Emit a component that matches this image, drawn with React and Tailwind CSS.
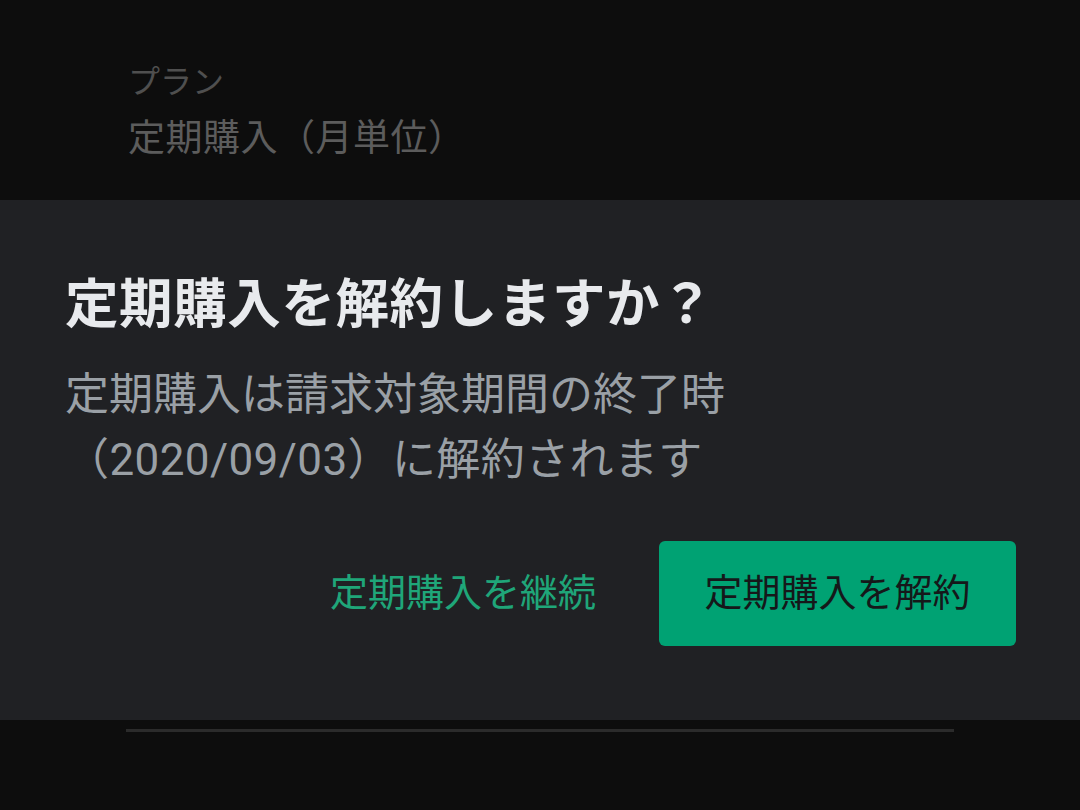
export default function App() {
  const font = { fontFamily: "Roboto, 'Noto Sans CJK JP', sans-serif" };
  return (
    <div className="w-[1080px] h-[810px] bg-[#0d0d0d] flex flex-col overflow-hidden" style={font}>
      <div className="h-[200px] pl-[128px] pt-[62px] flex flex-col">
        <div className="text-[32px] leading-[40px] text-[#4f4f4f]">プラン</div>
        <div className="text-[37px] leading-[48px] mt-[13px] text-[#5c5c5c] tracking-[0.5px]">定期購入（月単位）</div>
      </div>
      <div className="h-[520px] bg-[#202124] pl-[65px] pr-[64px] pt-[75px] flex flex-col">
        <div className="text-[53.5px] leading-[60px] font-bold text-[#e8eaed] tracking-[0.6px]">定期購入を解約しますか？</div>
        <div className="mt-[28px] text-[44px] leading-[65px] text-[#9aa0a6]">
          <div>定期購入は請求対象期間の終了時</div>
          <div className="tracking-[0.4px]">（2020/09/03）に解約されます</div>
        </div>
        <div className="mt-[48px] flex justify-end items-center">
          <button className="h-[105px] px-[32px] text-[38px] text-[#1fa679] mr-[31px]">定期購入を継続</button>
          <button className="h-[105px] w-[357px] rounded-[6px] bg-[#00a273] text-[38px] text-[#15181a]">定期購入を解約</button>
        </div>
      </div>
      <div className="pl-[126px] pt-[9px]">
        <div className="w-[828px] h-[3px] bg-[#2b2b2b]" />
      </div>
    </div>
  );
}
